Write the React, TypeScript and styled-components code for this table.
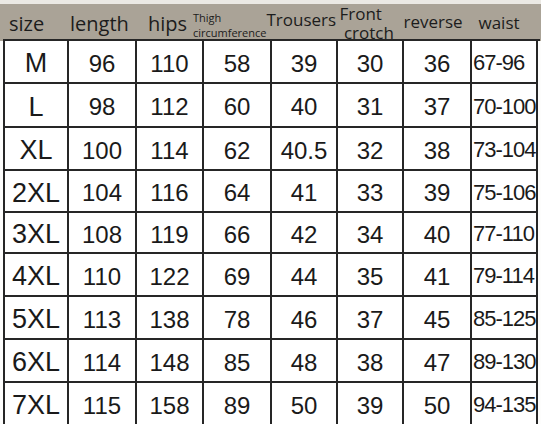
import styled, { createGlobalStyle } from 'styled-components';

//type
interface HeadItem {
  label: string;
  width: number;
  left: number;
  top: number;
  size: number;
}

//data
const heads: HeadItem[] = [
  { label: 'size', width: 66, left: 9, top: 10, size: 20 },
  { label: 'length', width: 78, left: 4, top: 10, size: 20 },
  { label: 'hips', width: 49, left: 4, top: 10, size: 20 },
  { label: 'Thigh\ncircumference', width: 73, left: 0, top: 6, size: 11 },
  { label: 'Trousers', width: 73, left: 0, top: 6, size: 17 },
  { label: 'Front\n crotch', width: 64, left: 0, top: 0, size: 17 },
  { label: 'reverse', width: 75, left: 0, top: 8, size: 17 },
  { label: 'waist', width: 63, left: 0, top: 9, size: 17 },
];

const colWidths = [64, 68, 67, 68, 66, 66, 68, 66];
const rowHeights = [43, 44, 43, 42, 41, 43, 43, 43, 43];

const rows: string[][] = [
  ['M', '96', '110', '58', '39', '30', '36', '67-96'],
  ['L', '98', '112', '60', '40', '31', '37', '70-100'],
  ['XL', '100', '114', '62', '40.5', '32', '38', '73-104'],
  ['2XL', '104', '116', '64', '41', '33', '39', '75-106'],
  ['3XL', '108', '119', '66', '42', '34', '40', '77-110'],
  ['4XL', '110', '122', '69', '44', '35', '41', '79-114'],
  ['5XL', '113', '138', '78', '46', '37', '45', '85-125'],
  ['6XL', '114', '148', '85', '48', '38', '47', '89-130'],
  ['7XL', '115', '158', '89', '50', '39', '50', '94-135'],
];

//styled component
const GlobalStyle = createGlobalStyle`
  html, body {
    margin: 0;
    padding: 0;
    background: #ffffff;
  }
  body {
    width: 541px;
    height: 424px;
    overflow: hidden;
  }
`;

const StyledChart = styled.div`
  width: 541px;
  height: 424px;
  background: #fdfdfc;
  border-top: 4px solid #ebe9e4;
  box-sizing: border-box;
  overflow: hidden;
`;

const HeaderBar = styled.div`
  display: flex;
  height: 37px;
  background: #aaa397;
  color: #1c1c1c;
  font-family: 'Open Sans', 'Liberation Sans', sans-serif;
`;

const HeadCell = styled.div<{ $w: number; $left: number; $top: number; $size: number }>`
  flex: 0 0 ${(props) => props.$w}px;
  padding: ${(props) => props.$top}px 0 0 ${(props) => props.$left}px;
  box-sizing: border-box;
  font-size: ${(props) => props.$size}px;
  line-height: ${(props) => (props.$size < 14 ? 15 : 19)}px;
  white-space: pre;
`;

const Table = styled.div`
  margin-left: 3px;
  border-left: 2px solid #262626;
  border-top: 2px solid #262626;
  margin-top: -2px;
  width: 535px;
  font-family: 'Liberation Sans', Arial, sans-serif;
  color: #1a1a1a;
`;

const Row = styled.div<{ $h: number }>`
  display: flex;
  height: ${(props) => props.$h}px;
`;

const Cell = styled.div<{ $w: number; $kind: 'size' | 'value' | 'range' }>`
  flex: 0 0 ${(props) => props.$w}px;
  box-sizing: border-box;
  border-right: 2px solid #262626;
  border-bottom: 2px solid #262626;
  background: #ffffff;
  display: flex;
  align-items: center;
  justify-content: ${(props) => (props.$kind === 'range' ? 'flex-start' : 'center')};
  padding: ${(props) => (props.$kind === 'range' ? '3px 0 0 1px' : '4px 0 0 0')};
  overflow: hidden;
  white-space: nowrap;
  font-size: ${(props) => (props.$kind === 'size' ? 27 : props.$kind === 'range' ? 22 : 24)}px;
  letter-spacing: ${(props) => (props.$kind === 'range' ? '-1px' : '0')};
`;

function SizeChart() {
  return (
    <StyledChart>
      <HeaderBar>
        {heads.map((h, i) => (
          <HeadCell key={i} $w={h.width} $left={h.left} $top={h.top} $size={h.size}>
            {h.label}
          </HeadCell>
        ))}
      </HeaderBar>
      <Table>
        {rows.map((r, ri) => (
          <Row key={r[0]} $h={rowHeights[ri]}>
            {r.map((v, ci) => (
              <Cell
                key={ci}
                $w={colWidths[ci]}
                $kind={ci === 0 ? 'size' : ci === r.length - 1 ? 'range' : 'value'}
              >
                {v}
              </Cell>
            ))}
          </Row>
        ))}
      </Table>
    </StyledChart>
  );
}

function App() {
  return (
    <>
      <GlobalStyle />
      <SizeChart />
    </>
  );
}

export default App;
